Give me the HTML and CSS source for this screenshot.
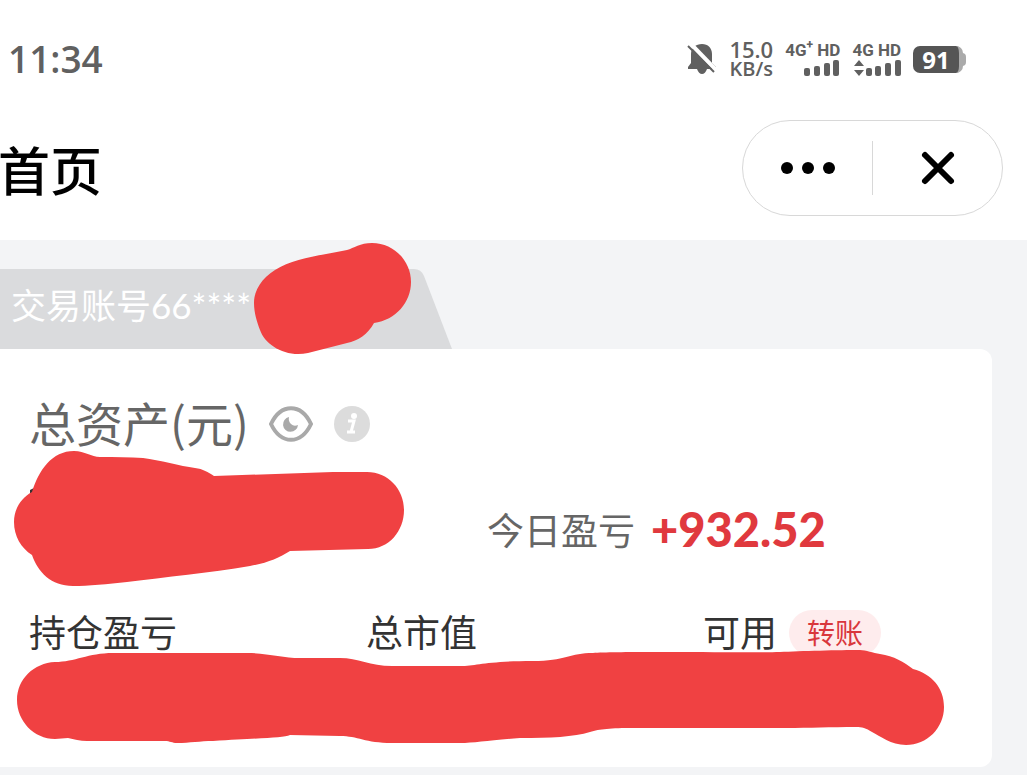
FILE: index.html
```
<!DOCTYPE html>
<html lang="zh-CN">
<head>
	<meta charset="UTF-8">
	<meta name="viewport" content="width=device-width">
	<title>首页</title>
	<link rel="stylesheet" href="styles.css">
</head>
<body>
	<div class="status">
		<time class="clock">11:34</time>
		<div class="status-right">
			<svg class="mute" width="30" height="34" viewBox="0 0 30 34">
				<path d="M15 2c-6 0-11 4-11 10v9l-3 4v2h9c1 3 3 5 5 5s4-2 5-5h9v-2l-4-4v-9c0-6-4-10-10-10z" fill="#606060"/>
				<path d="M3 1l27 28" stroke="#fff" stroke-width="4"/>
				<path d="M1 4l26 26" stroke="#606060" stroke-width="2"/>
			</svg>
			<div class="speed"><span class="num">15.0</span><span>KB/s</span></div>
			<div class="signal">
				<span>4G<sup>+</sup> HD</span>
				<svg width="36" height="18" viewBox="0 0 36 18" fill="#606060">
					<rect x="0" y="9" width="6" height="8" rx="2"/>
					<rect x="10" y="7" width="6" height="10" rx="2"/>
					<rect x="20" y="4" width="6" height="13" rx="2"/>
					<rect x="29" y="1" width="6" height="16" rx="2"/>
				</svg>
			</div>
			<div class="signal">
				<span>4G HD</span>
				<svg width="47" height="18" viewBox="0 0 47 18" fill="#606060">
					<path d="M5 1l5 6H0zM0 11h10l-5 6z"/>
					<rect x="12" y="9" width="6" height="8" rx="2"/>
					<rect x="21" y="7" width="6" height="10" rx="2"/>
					<rect x="31" y="4" width="6" height="13" rx="2"/>
					<rect x="41" y="1" width="6" height="16" rx="2"/>
				</svg>
			</div>
			<div class="battery"><span>91</span></div>
		</div>
	</div>

	<header class="navbar">
		<h1>首页</h1>
		<div class="capsule">
			<button type="button" aria-label="更多">
				<svg width="56" height="14" viewBox="0 0 56 14">
					<circle cx="7" cy="7" r="6"/>
					<circle cx="28" cy="7" r="6"/>
					<circle cx="49" cy="7" r="6"/>
				</svg>
			</button>
			<i class="line"></i>
			<button type="button" aria-label="关闭">
				<svg width="36" height="36" viewBox="0 0 36 36">
					<path d="M5 5l26 26M31 5L5 31" stroke="#000" stroke-width="6" stroke-linecap="round"/>
				</svg>
			</button>
		</div>
	</header>

	<main class="account">
		<div class="tab">
			<span class="tab-text">交易账号66****</span>
			<svg width="52" height="80" viewBox="0 0 52 80">
				<path d="M0 0h14q7 0 10 7l28 73H0z" fill="#dadbdd"/>
			</svg>
		</div>
		<section class="card">
			<div class="total">
				<h2>总资产(元)</h2>
				<button type="button" aria-label="隐藏金额">
					<svg width="44" height="36" viewBox="0 0 44 36">
						<path d="M2 18C12-3 32-3 42 18C32 39 12 39 2 18z" fill="none" stroke="#a9a9a9" stroke-width="4"/>
						<path d="M20 11a7.500 7.500 0 1 0 9 8q-4 2-7-1t-2-7z" fill="#a9a9a9"/>
					</svg>
				</button>
				<button type="button" aria-label="说明">
					<svg width="38" height="38" viewBox="0 0 38 38">
						<circle cx="19" cy="19" r="18" fill="#dcdcdc"/>
						<circle cx="21" cy="11" r="3" fill="#fff"/>
						<path d="M15 16h6l-3 11M14 27h8" fill="none" stroke="#fff" stroke-width="3"/>
					</svg>
				</button>
			</div>
			<div class="today">
				<span>今日盈亏</span>
				<b>+932.52</b>
			</div>
			<div class="items">
				<span>持仓盈亏</span>
				<span>总市值</span>
				<span class="usable">可用 <button type="button" class="transfer">转账</button></span>
			</div>
		</section>

		<!-- 涂抹遮挡 -->
		<svg class="cover" width="1027" height="535" viewBox="0 240 1027 535" fill="#f04142">
			<path d="M30 490l4-2v5h-4z" fill="#333"/>
			<path d="M254 303C254 290 262 278 275 270C294 258 323 255 347 250C354 248 360 243 372 243C394 243 411 261 411 282C411 302 396 320 374 323C368 334 358 341 347 343L308 353C286 358 265 345 260 330C257 322 254 313 254 303z"/>
			<path d="M14 522C14 509 21 498 32 492C39 470 52 451 74 451C85 451 91 457 100 457C115 457 130 457 143 458C160 460 180 466 195 468C203 469 208 472 214 476L333 472H367C388 472 404 489 404 510C404 531 389 549 368 549L290 551C279 558 267 563 250 566C210 573 165 577 127 582C108 584 88 586 73 586C51 586 38 572 32 555C21 548 14 536 14 522z"/>
			<path d="M17 700C17 679 34 663 55 662C75 662 88 653 113 653H247C267 653 283 658 300 658H340C358 658 370 666 392 666H460C477 666 485 661 533 661C565 661 570 653 593 653C620 651 750 653 780 652C800 651 840 650 860 650C866 650 873 653 880 654C894 656 904 662 913 669C932 674 944 688 944 707C944 728 927 745 906 745C891 745 880 736 872 732C866 728 862 727 856 727C830 727 810 728 786 728H634C610 728 600 729 590 732C574 737 550 738 520 738C490 740 475 743 460 743H392C365 743 358 736 340 736L290 735C283 738 260 738 213 741C200 741 190 743 177 743C172 743 170 741 165 741H87C80 741 74 739 68 738L55 739C34 739 17 721 17 700z"/>
		</svg>
	</main>
</body>
</html>
```
FILE: styles.css
```
*{
	box-sizing: border-box;
}
body{
	margin: 0;
	min-height: 100vh;
	overflow: hidden;
	background: #f3f4f6;
	font-family: Lato, "Noto Sans CJK SC", sans-serif;
	color: #333;
}
h1,h2{
	margin: 0;
	font-weight: 400;
}
button{
	padding: 0;
	border: 0;
	background: none;
	font-family: inherit;
	cursor: pointer;
}
svg{
	display: block;
}
/* 状态栏 */
.status{
	display: flex;
	align-items: center;
	justify-content: space-between;
	height: 96px;
	padding: 22px 64px 0 8px;
	background: #fff;
	color: #606060;
}
.clock{
	font-family: "Open Sans", sans-serif;
	font-size: 37px;
	font-weight: 600;
	line-height: 44px;
}
.status-right{
	display: flex;
	align-items: center;
	gap: 12px;
}
.speed{
	display: flex;
	flex-direction: column;
	align-items: center;
	font-family: "Open Sans", sans-serif;
	font-size: 20px;
	font-weight: 600;
	line-height: 20px;
}
.speed .num{
	font-size: 22px;
}
.signal{
	display: flex;
	flex-direction: column;
	align-items: flex-end;
	font-family: Roboto, sans-serif;
	font-size: 17px;
	font-weight: 700;
	line-height: 18px;
}
.signal sup{
	font-size: 12px;
	line-height: 0;
}
.battery{
	display: flex;
	align-items: center;
	justify-content: center;
	width: 50px;
	height: 27px;
	border-radius: 7px;
	border-right: 4px solid #aaa;
	background: #555;
	color: #fff;
	font-family: "Open Sans", sans-serif;
	font-size: 24px;
	font-weight: 700;
	position: relative;
}
.battery::after{
	content: "";
	position: absolute;
	right: -7px;
	top: 7px;
	width: 4px;
	height: 13px;
	border-radius: 0 4px 4px 0;
	background: #aaa;
}
/* 导航 */
.navbar{
	display: flex;
	align-items: center;
	justify-content: space-between;
	height: 144px;
	padding-right: 24px;
	background: #fff;
}
.navbar h1{
	margin-left: -2px;
	font-size: 52px;
	font-weight: 500;
	color: #000;
}
.capsule{
	display: flex;
	align-items: center;
	width: 261px;
	height: 96px;
	border: 1px solid #d8d8d8;
	border-radius: 48px;
}
.capsule button{
	display: flex;
	flex: 1;
	align-items: center;
	justify-content: center;
	height: 100%;
}
.line{
	width: 1px;
	height: 54px;
	background: #d8d8d8;
}
/* 账户 */
.account{
	position: relative;
	padding: 29px 35px 8px 0;
}
.tab{
	display: flex;
	height: 80px;
	font-size: 35px;
	line-height: 72px;
	color: #fff;
}
.tab-text{
	min-width: 400px;
	padding-left: 11px;
	background: #dadbdd;
}
.card{
	padding: 40px 0 58px 29px;
	border-radius: 0 12px 12px 0;
	background: #fff;
	min-height: 418px;
}
.total{
	display: flex;
	align-items: center;
	gap: 20px;
	height: 70px;
}
.total h2{
	padding-bottom: 6px;
	font-family: "Noto Sans CJK SC", sans-serif;
	font-size: 47px;
	color: #666;
}
.today{
	display: flex;
	align-items: center;
	gap: 16px;
	height: 60px;
	margin: 40px 0 46px;
	padding-left: 458px;
	font-size: 37px;
	color: #666;
}
.today b{
	font-size: 47px;
	font-weight: 900;
	color: #e0393e;
}
.items{
	display: grid;
	grid-template-columns: 35% 35% 30%;
	align-items: center;
	font-size: 37px;
	line-height: 56px;
}
.usable{
	display: flex;
	align-items: center;
	gap: 12px;
}
.transfer{
	height: 46px;
	padding: 0 18px;
	border-radius: 23px;
	background: #feeced;
	font-size: 28px;
	line-height: 46px;
	color: #d9373c;
}
.cover{
	position: absolute;
	left: 0;
	top: 0;
	pointer-events: none;
}
```
